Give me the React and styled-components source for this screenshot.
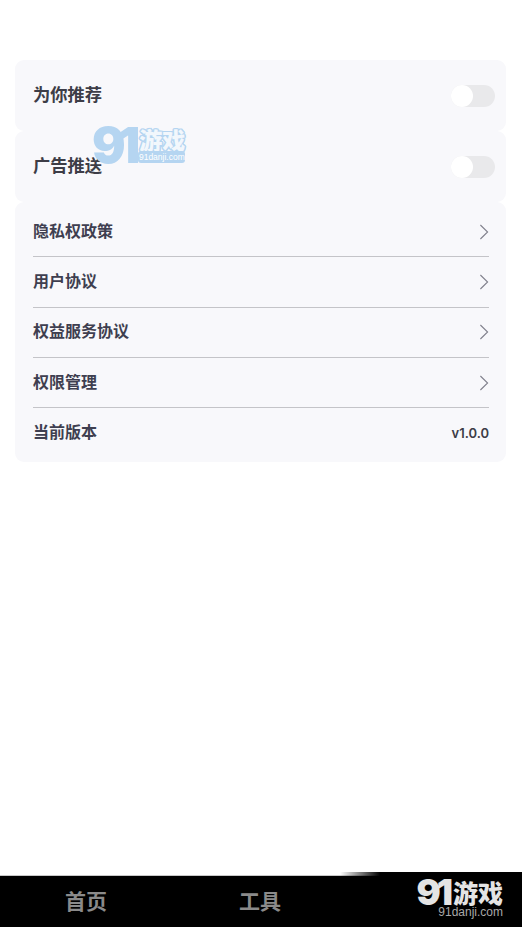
import React from 'react';
import styled, { createGlobalStyle } from 'styled-components';

const GlobalStyle = createGlobalStyle`
  html, body {
    margin: 0;
    padding: 0;
    background: #fff;
  }
  body {
    font-family: "Inter", "Noto Sans CJK SC", sans-serif;
  }
`;

const Page = styled.div`
  position: relative;
  width: 522px;
  height: 927px;
  display: flex;
  flex-direction: column;
  overflow: hidden;
  background: #fff;
`;

const Content = styled.main`
  flex: 1;
  padding: 60px 16px 0 15px;
  display: flex;
  flex-direction: column;
`;

const Card = styled.section`
  background: #f8f8fb;
  border-radius: 9px;
`;

const SwitchCard = styled(Card)`
  height: 71px;
  padding: 0 11px 0 18px;
  display: flex;
  align-items: center;
  justify-content: space-between;
`;

const SwitchLabel = styled.span`
  font-size: 17.3px;
  font-weight: 600;
  color: #3d3d47;
  line-height: 71px;
  position: relative;
  top: -1px;
`;

const Track = styled.div`
  position: relative;
  width: 44px;
  height: 22px;
  border-radius: 11px;
  background: #e9e9eb;
`;

const Thumb = styled.div`
  position: absolute;
  left: 0;
  top: 0;
  width: 22px;
  height: 22px;
  border-radius: 50%;
  background: #fff;
`;

const LinkCard = styled(Card)`
  height: 260px;
  padding: 4px 17px 0 18px;
  box-sizing: border-box;
`;

const Row = styled.div`
  height: 50.4px;
  box-sizing: border-box;
  display: flex;
  align-items: center;
  justify-content: space-between;
  border-bottom: ${props => props.last ? 'none' : '1px solid #c4c4c8'};
  padding-bottom: ${props => props.last ? '2px' : '0'};
  &:first-child {
    height: 51.2px;
    padding-top: 2px;
  }
`;

const RowLabel = styled.span`
  font-size: 16px;
  font-weight: 600;
  color: #3f3f50;
  position: relative;
  top: -2px;
`;

const Version = styled.span`
  font-size: 13px;
  font-weight: 600;
  color: #3d3d47;
`;

const Chevron = () => (
  <svg width="10" height="16" viewBox="0 0 10 16" fill="none">
    <path d="M1.4 1 L8.6 8 L1.4 15" stroke="#80808c" strokeWidth="1.1" />
  </svg>
);

const TabBar = styled.nav`
  height: 52px;
  flex-shrink: 0;
  background: #000;
  border-top: 1px solid #c8c8c8;
  box-sizing: border-box;
  display: flex;
  align-items: center;
  padding-left: 65px;
  gap: 131px;
`;

const Tab = styled.span`
  font-size: 21px;
  font-weight: 600;
  color: #8a8a8a;
  width: 43px;
  white-space: nowrap;
  position: relative;
  top: -2px;
`;

const LightMark = styled.div`
  position: absolute;
  left: 92px;
  top: 120px;
  display: flex;
  font-family: "Liberation Sans", "Noto Sans CJK SC", sans-serif;
`;

const DarkMark = styled.div`
  position: absolute;
  right: 0;
  top: 872px;
  height: 55px;
  width: 182px;
  padding: 7px 19px 0 0;
  box-sizing: border-box;
  display: flex;
  flex-direction: column;
  align-items: flex-end;
  font-family: "Liberation Sans", "Noto Sans CJK SC", sans-serif;
  background: linear-gradient(90deg, transparent 0, #000 40px) no-repeat;
  background-size: 100% 4px;
`;

const MarkTop = styled.div`
  height: 26px;
  display: flex;
  align-items: center;
`;

const Digits = styled.span`
  font-family: "Inter", sans-serif;
  font-size: ${props => props.size}px;
  font-weight: 900;
  letter-spacing: ${props => props.spacing}px;
  line-height: ${props => props.lineHeight}px;
  color: ${props => props.color};
  white-space: nowrap;
`;

const LightText = styled.div`
  display: flex;
  flex-direction: column;
  align-items: flex-end;
  margin-top: 8px;
  margin-left: 6px;
`;

const LightTitle = styled.span`
  font-family: "Noto Sans CJK SC", sans-serif;
  font-size: 23px;
  font-weight: 900;
  line-height: 23px;
  color: #f2f7fc;
  text-shadow: 1.5px 0 #b5d5f1, -1.5px 0 #b5d5f1, 0 1.5px #b5d5f1, 0 -1.5px #b5d5f1,
    1px 1px #b5d5f1, -1px -1px #b5d5f1, 1px -1px #b5d5f1, -1px 1px #b5d5f1;
`;

const LightSite = styled.span`
  font-size: 8.5px;
  line-height: 12px;
  width: 47px;
  text-align: center;
  white-space: nowrap;
  color: #fff;
  background: #b5d5f1;
  border-radius: 3px;
`;

const DarkTitle = styled.span`
  font-family: "Noto Sans CJK SC", sans-serif;
  font-size: 25px;
  font-weight: 900;
  line-height: 26px;
  height: 26px;
  color: #e4e4e4;
  margin-left: 4px;
`;

const DarkSite = styled.span`
  font-size: 12px;
  line-height: 14px;
  color: #a8a8a8;
`;

const SWITCHES = ['为你推荐', '广告推送'];
const LINKS = ['隐私权政策', '用户协议', '权益服务协议', '权限管理'];

const App = () => (
  <Page>
    <GlobalStyle />
    <Content>
      {SWITCHES.map(label => (
        <SwitchCard key={label}>
          <SwitchLabel>{label}</SwitchLabel>
          <Track><Thumb /></Track>
        </SwitchCard>
      ))}
      <LinkCard>
        {LINKS.map(label => (
          <Row key={label}>
            <RowLabel>{label}</RowLabel>
            <Chevron />
          </Row>
        ))}
        <Row last>
          <RowLabel>当前版本</RowLabel>
          <Version>v1.0.0</Version>
        </Row>
      </LinkCard>
    </Content>
    <TabBar>
      <Tab>首页</Tab>
      <Tab>工具</Tab>
    </TabBar>
    <LightMark>
      <Digits size={50} spacing={-8} lineHeight={50} color="#b5d5f1">91</Digits>
      <LightText>
        <LightTitle>游戏</LightTitle>
        <LightSite>91danji.com</LightSite>
      </LightText>
    </LightMark>
    <DarkMark>
      <MarkTop>
        <Digits size={36} spacing={-4} lineHeight={26} color="#e4e4e4">91</Digits>
        <DarkTitle>游戏</DarkTitle>
      </MarkTop>
      <DarkSite>91danji.com</DarkSite>
    </DarkMark>
  </Page>
);

export default App;
